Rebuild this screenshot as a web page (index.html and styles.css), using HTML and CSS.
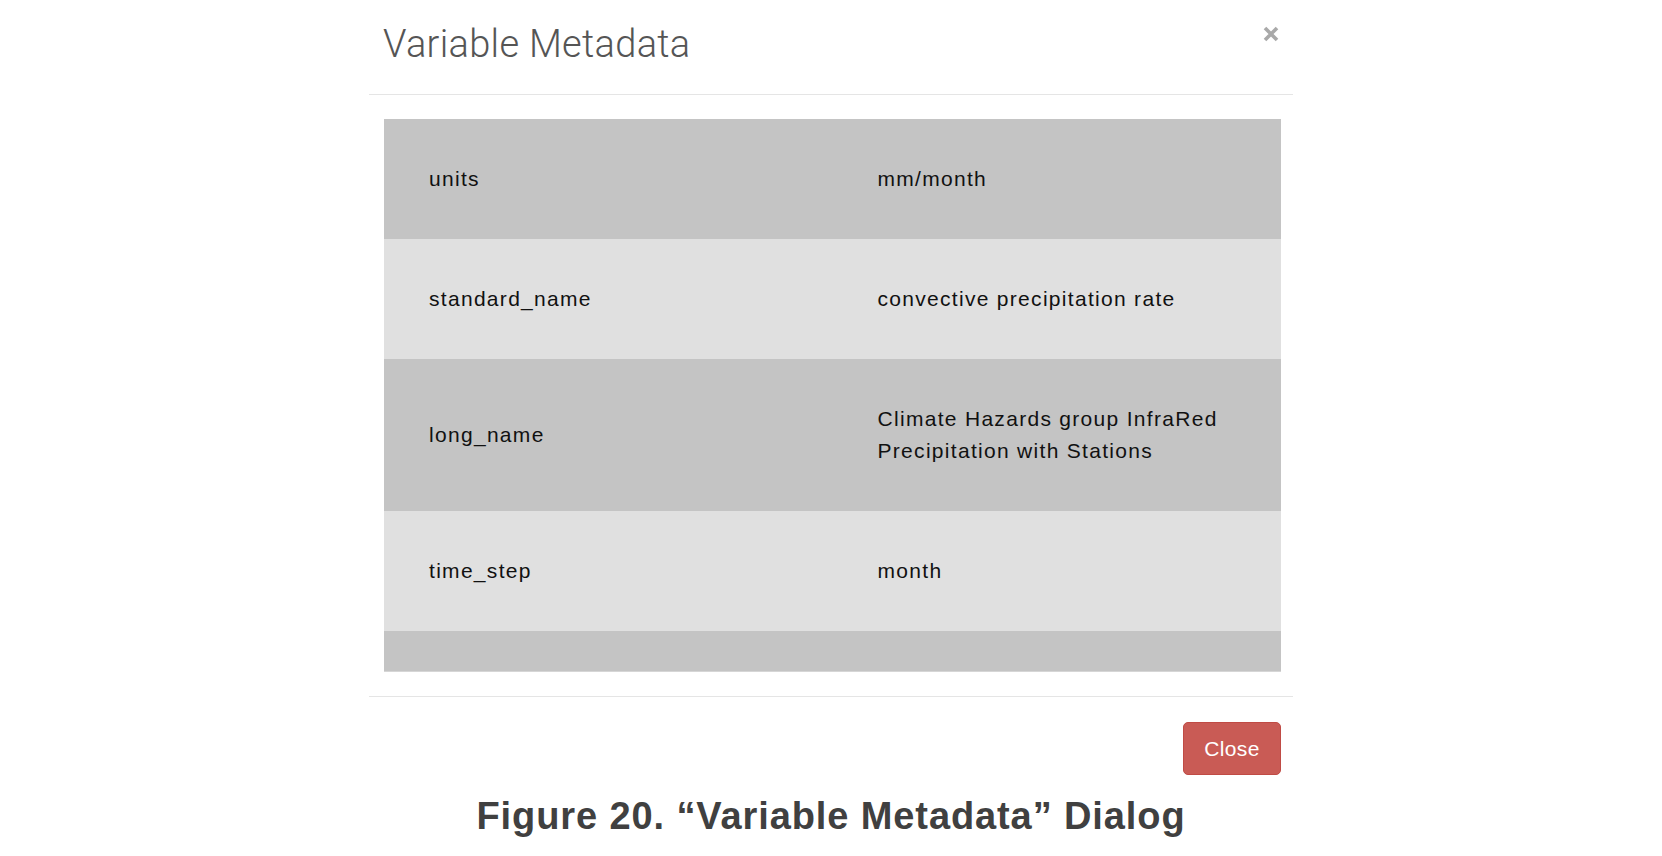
FILE: index.html
```html
<!DOCTYPE html>
<html lang="en">
<head>
<meta charset="utf-8">
<title>Variable Metadata</title>
<link rel="stylesheet" href="styles.css">
</head>
<body>
<div class="page">
  <div class="modal">
    <div class="modal-header">
      <h4 class="modal-title">Variable Metadata</h4>
      <button class="close" type="button" aria-label="Close">
        <svg width="16" height="16" viewBox="0 0 16 16"><path d="M2 2 L14 14 M14 2 L2 14" stroke="#a9a9a9" stroke-width="3.6" stroke-linecap="butt" fill="none"/></svg>
      </button>
    </div>
    <div class="modal-body">
      <table class="meta-table">
        <tbody>
          <tr class="row-dark"><td>units</td><td>mm/month</td></tr>
          <tr class="row-light"><td>standard_name</td><td>convective precipitation rate</td></tr>
          <tr class="row-dark"><td>long_name</td><td>Climate Hazards group InfraRed Precipitation with Stations</td></tr>
          <tr class="row-light"><td>time_step</td><td>month</td></tr>
          <tr class="row-dark row-empty"><td></td><td></td></tr>
        </tbody>
      </table>
    </div>
    <div class="modal-footer">
      <button class="btn-danger" type="button">Close</button>
    </div>
  </div>
  <p class="caption">Figure 20. “Variable Metadata” Dialog</p>
</div>
</body>
</html>
```

FILE: styles.css
```css
html, body {
  margin: 0;
  padding: 0;
  background: #ffffff;
}

.page {
  width: 1662px;
  height: 856px;
  overflow: hidden;
  font-family: "Liberation Sans", Arial, sans-serif;
}

.modal {
  width: 924px;
  margin: 0 auto;
}

.modal-header {
  display: flex;
  justify-content: space-between;
  align-items: flex-start;
  padding: 22px 14px 28px 14px;
  border-bottom: 1px solid #e5e5e5;
}

.modal-title {
  margin: 0;
  font-family: Roboto, "Liberation Sans", sans-serif;
  font-weight: 300;
  font-size: 38px;
  line-height: 44px;
  color: #555555;
  letter-spacing: 0.3px;
}

.close {
  margin: 4px 0 0 0;
  padding: 0;
  border: 0;
  background: transparent;
  width: 16px;
  height: 16px;
  line-height: 0;
}

.modal-body {
  padding: 24px 12px 24px 15px;
}

.meta-table {
  width: 897px;
  border-collapse: collapse;
  table-layout: fixed;
  font-size: 21px;
  line-height: 32px;
  letter-spacing: 1.3px;
  color: #111111;
  border-bottom: 1px solid #d6d6d6;
}

.meta-table td {
  width: 50%;
  padding: 44px 45px;
  vertical-align: middle;
}

.row-dark {
  background: #c4c4c4;
}

.row-light {
  background: #e0e0e0;
}

.row-empty td {
  padding: 0;
  height: 40px;
}

.modal-footer {
  display: flex;
  justify-content: flex-end;
  padding: 25px 12px 0 15px;
  border-top: 1px solid #e5e5e5;
}

.btn-danger {
  width: 98px;
  height: 53px;
  padding: 0;
  border: 1px solid #c04b45;
  border-radius: 5px;
  background: #c95b55;
  color: #ffffff;
  font-family: "Liberation Sans", Arial, sans-serif;
  font-size: 21px;
  letter-spacing: 0.4px;
}

.caption {
  margin: 19px 0 0 0;
  text-align: center;
  font-family: "Liberation Sans", Arial, sans-serif;
  font-weight: 700;
  font-size: 38px;
  line-height: 44px;
  letter-spacing: 0.9px;
  color: #404040;
}
```
